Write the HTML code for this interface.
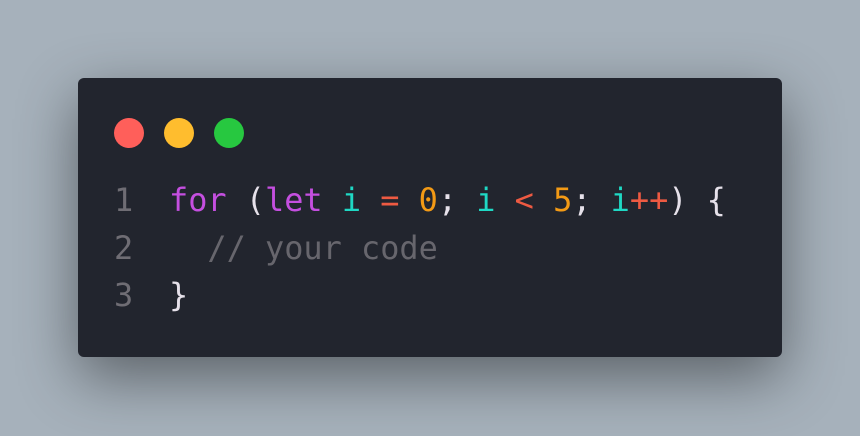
<!DOCTYPE html>
<html><head><style>
html,body{margin:0;width:860px;height:436px;overflow:hidden}
body{background:#a6b1bb;position:relative;font-family:"DejaVu Sans Mono","Liberation Mono",monospace}
.card{position:absolute;left:78px;top:78px;width:704px;height:279px;background:#22252e;border-radius:6px;box-shadow:0 20px 60px rgba(0,0,0,.45)}
.dot{position:absolute;top:118px;width:30px;height:30px;border-radius:50%}
.code{position:absolute;left:0;top:177px;font-size:31.9px;line-height:47.5px;white-space:pre;color:#e6e1ea}
.ln{position:absolute;left:114px;color:#6f6d74}
.l{position:absolute;left:169px}
.k{color:#c54fe0}.v{color:#1fd8c4}.o{color:#ee5a42}.n{color:#f39a15}.c{color:#67666d}
</style></head><body>
<div class="card"></div>
<div class="dot" style="left:114px;background:#ff5f5a"></div>
<div class="dot" style="left:164px;background:#ffbd2e"></div>
<div class="dot" style="left:214px;background:#27c840"></div>
<div class="code">
<div class="ln" style="top:0">1</div><div class="l" style="top:0"><span class="k">for</span> (<span class="k">let</span> <span class="v">i</span> <span class="o">=</span> <span class="n">0</span>; <span class="v">i</span> <span class="o">&lt;</span> <span class="n">5</span>; <span class="v">i</span><span class="o">++</span>) {</div>
<div class="ln" style="top:47.5px">2</div><div class="l c" style="top:47.5px">  // your code</div>
<div class="ln" style="top:95px">3</div><div class="l" style="top:95px">}</div>
</div>
</body></html>
